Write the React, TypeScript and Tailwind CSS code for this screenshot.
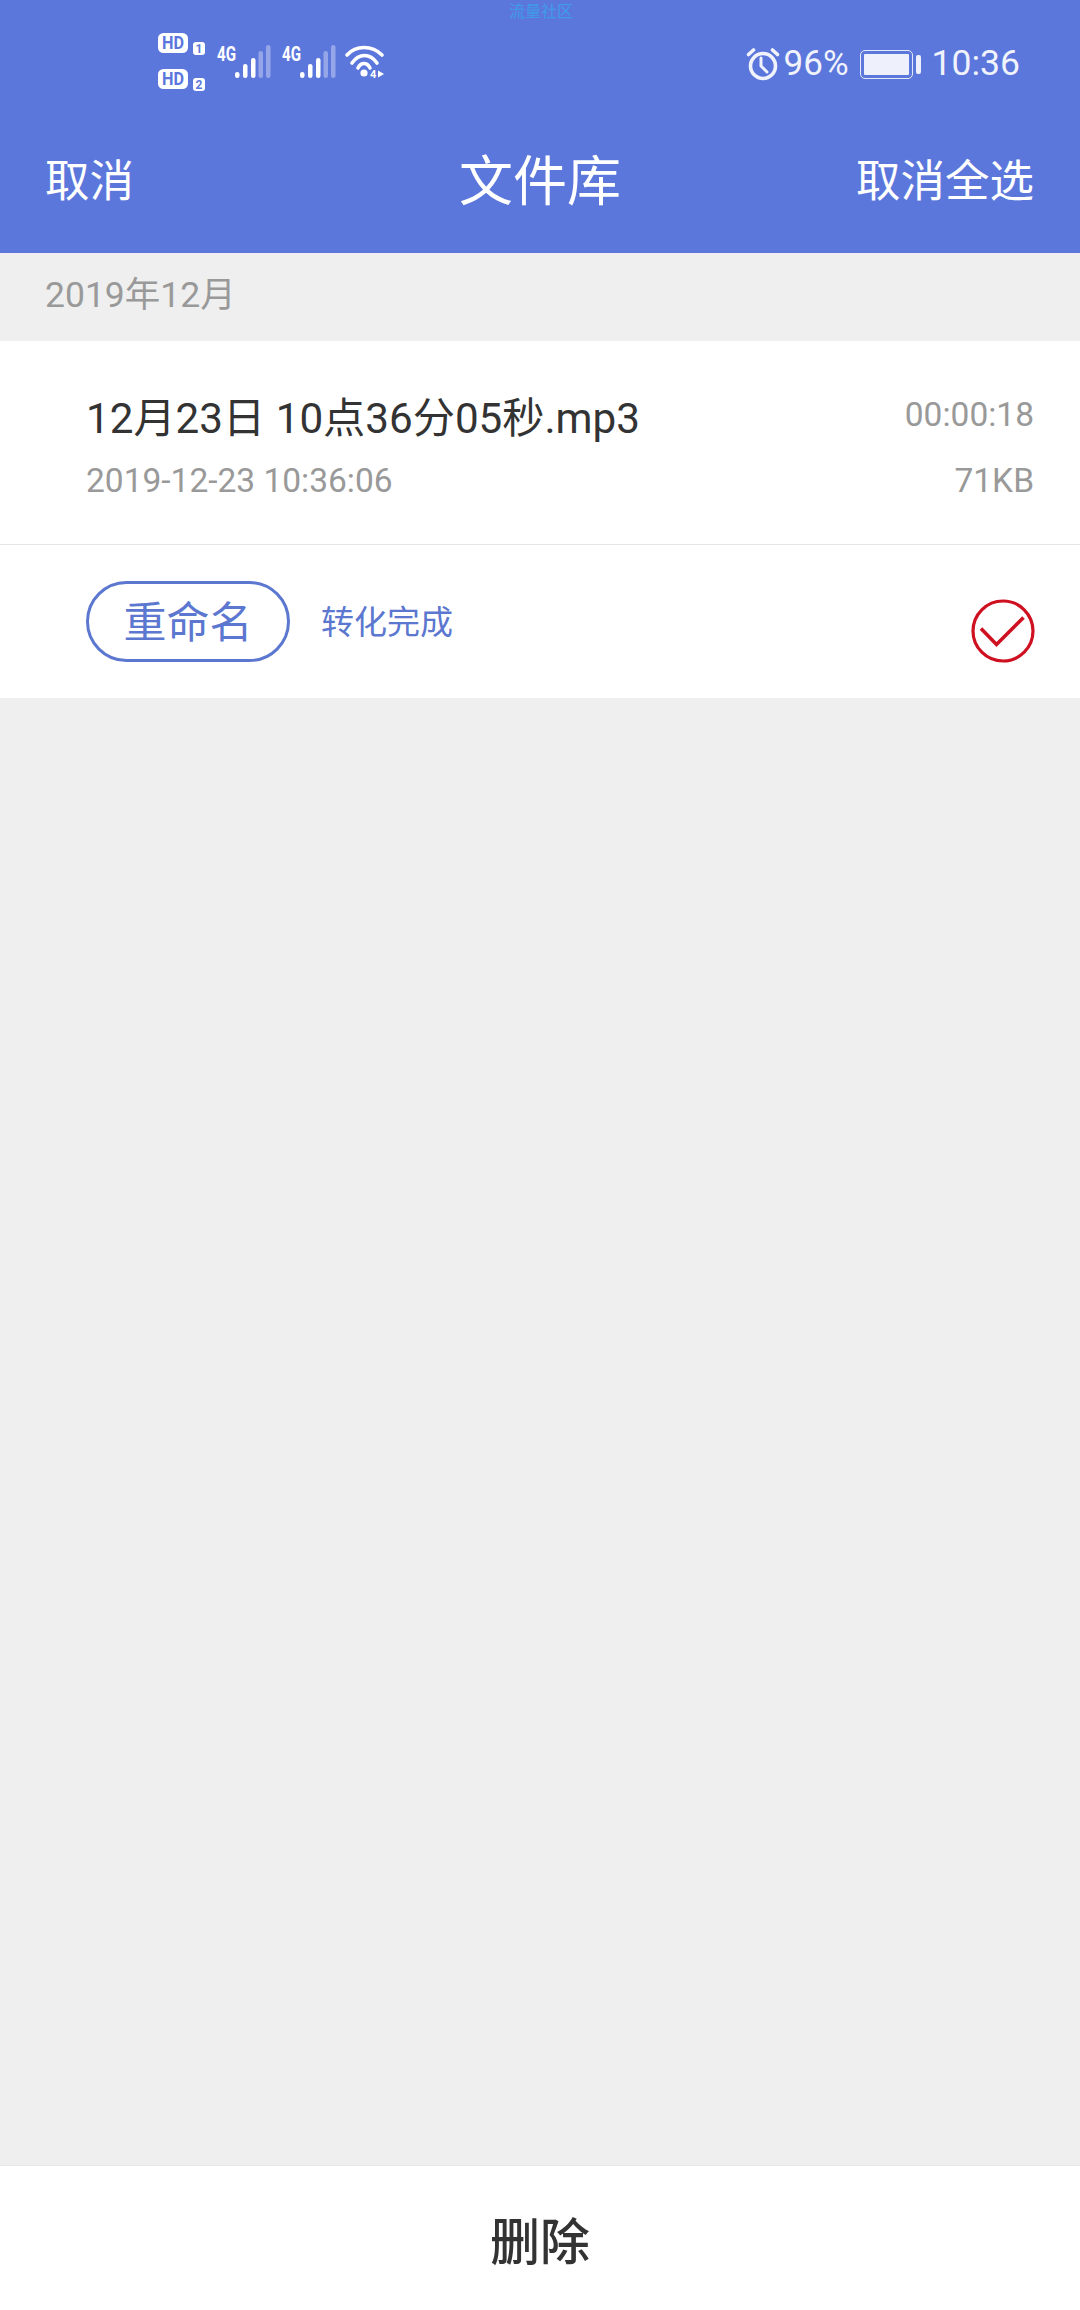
const F = '"Roboto","Noto Sans CJK SC",sans-serif';

function Signal({ x }: { x: number }) {
  return (
    <g transform={`translate(${x} 0)`}>
      <text x="0" y="61" fontSize="20" fontWeight="700" fill="#fff" fontFamily="Roboto" textLength="19" lengthAdjust="spacingAndGlyphs">4G</text>
      <rect x="18" y="72" width="4.5" height="6" rx="2.2" fill="#fff" />
      <rect x="26" y="64" width="4.5" height="14" rx="2.2" fill="#fff" />
      <rect x="34" y="58" width="4.5" height="20" rx="2.2" fill="#fff" />
      <rect x="41.5" y="51" width="4.5" height="27" rx="2.2" fill="#fff" fillOpacity=".35" />
      <rect x="49" y="45" width="4.5" height="33" rx="2.2" fill="#fff" fillOpacity=".35" />
    </g>
  );
}

function HdBadge({ y, n }: { y: number; n: string }) {
  return (
    <g>
      <rect x="28" y={y} width="30" height="20" rx="5.5" fill="#fff" />
      <text x="32" y={y + 16} fontSize="18" fontWeight="700" fill="#5b77de" fontFamily="Roboto" textLength="22" lengthAdjust="spacingAndGlyphs">HD</text>
      <rect x="63" y={y + 9} width="12" height="13" rx="3" fill="#fff" />
      <text x="65.5" y={y + 20} fontSize="12" fontWeight="700" fill="#5b77de" fontFamily="Roboto">{n}</text>
    </g>
  );
}

function StatusLeft() {
  return (
    <svg width="210" height="100" viewBox="0 0 210 100" className="absolute left-[130px] top-0">
      <HdBadge y={33} n="1" />
      <HdBadge y={69} n="2" />
      <Signal x={87} />
      <Signal x={152} />
    </svg>
  );
}

function Wifi() {
  return (
    <svg width="42" height="36" viewBox="0 0 42 36" className="absolute left-[344px] top-[44px]">
      <g fill="none" stroke="#fff" strokeWidth="3.6" strokeLinecap="round">
        <path d="M3 11 C12 1 28 1 38 11" />
        <path d="M8 19 C15 9 26 9 33 19" />
        <path d="M14 24 C17 18 23 18 26 24" />
      </g>
      <circle cx="20" cy="29" r="3.6" fill="#fff" />
      <text x="26" y="34" fontSize="11" fontWeight="700" fill="#fff" fontFamily="Roboto">4</text>
      <path d="M34 26.5l6 3.5-6 3.5z" fill="#fff" />
    </svg>
  );
}

function Alarm() {
  return (
    <svg width="34" height="34" viewBox="0 0 34 34" fill="none" stroke="#f0f3fc" strokeWidth="3.6" strokeLinecap="round">
      <circle cx="17" cy="19" r="12.5" />
      <path d="M15 11v8l6 6" strokeWidth="3" />
      <path d="M2.5 7.5l5-4.5M31.5 7.5l-5-4.5" />
    </svg>
  );
}

function Battery() {
  return (
    <div className="flex items-center gap-[3px]">
      <div className="w-[53px] h-[29px] rounded-[5px] border-[1.5px] border-[#e4e9f9] p-[3px]">
        <div className="w-full h-full bg-[#eef1fb] rounded-[1px]" />
      </div>
      <div className="w-[5px] h-[19px] bg-[#eef1fb] rounded-[2px]" />
    </div>
  );
}

export default function App() {
  return (
    <div className="w-[1080px] h-[2310px] flex flex-col bg-[#efefef] overflow-hidden" style={{ fontFamily: F }}>
      <header className="relative h-[253px] bg-[#5c77dc] text-white shrink-0">
        <div className="absolute left-[509px] top-0 text-[16px] leading-[23px] text-[#3f9bea]">流量社区</div>
        <StatusLeft />
        <Wifi />
        <div className="absolute right-[60px] top-[44px] h-[40px] flex items-center text-[#f0f3fc]">
          <Alarm />
          <span className="text-[35px] ml-[4px]">96%</span>
          <span className="ml-[11px]"><Battery /></span>
          <span className="text-[35.5px] ml-[11px]">10:36</span>
        </div>
        <div className="absolute left-0 right-0 top-[149px] h-[66px] pl-[45px] pr-[46px] flex items-center justify-between">
          <span className="text-[44.5px]">取消</span>
          <span className="text-[54px] absolute left-0 right-0 text-center">文件库</span>
          <span className="text-[44.5px]">取消全选</span>
        </div>
      </header>

      <div className="h-[88px] shrink-0 flex items-center pl-[45px] pb-[2px] text-[35.5px] text-[#999999]">2019年12月</div>

      <section className="bg-white shrink-0">
        <div className="h-[204px] border-b border-[#e6e6e6] pl-[86px] pr-[46px] pt-[7px] flex flex-col justify-center">
          <div className="flex items-center justify-between h-[60px]">
            <span className="text-[42.2px] text-[#333333]">12月23日 10点36分05秒.mp3</span>
            <span className="text-[33.5px] text-[#999999] mb-[6px]">00:00:18</span>
          </div>
          <div className="flex items-center justify-between h-[44px] mt-[11px]">
            <span className="text-[33.5px] text-[#999999]">2019-12-23 10:36:06</span>
            <span className="text-[33.5px] text-[#999999]">71KB</span>
          </div>
        </div>
        <div className="h-[153px] pl-[86px] pr-[45px] flex items-center justify-between">
          <div className="flex items-center">
            <div className="w-[204px] h-[81px] rounded-full border-[3px] border-[#5b77cf] flex items-center justify-center pt-[4px] text-[43px] text-[#5b77cf]">重命名</div>
            <span className="ml-[31px] text-[33px] text-[#5b77cf] mt-[2px]">转化完成</span>
          </div>
          <svg width="64" height="64" viewBox="0 0 64 64" fill="none" stroke="#cf1020" className="mt-[18px]">
            <circle cx="32" cy="32" r="30" strokeWidth="3.2" />
            <path d="M10 29.5 L25.5 45.5 L52.5 18.5" strokeWidth="3.6" />
          </svg>
        </div>
      </section>

      <div className="flex-1" />

      <footer className="h-[145px] bg-white border-t border-[#e6e6e6] shrink-0 flex items-center justify-center pt-[11px] text-[50px] font-medium text-[#333333]">删除</footer>
    </div>
  );
}
